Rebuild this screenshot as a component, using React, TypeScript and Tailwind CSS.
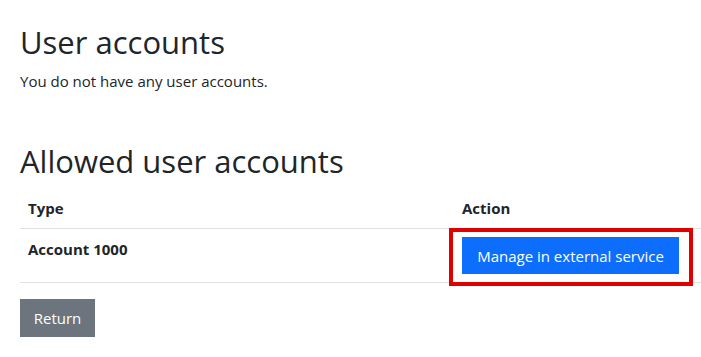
export default function App() {
  return (
    <div
      className="min-h-screen bg-white pl-[20px] pt-[23px] text-[15px] leading-[24px] text-[#212529]"
      style={{ fontFamily: '"Open Sans", "Noto Sans", sans-serif' }}
    >
      <h2 className="mb-2 text-[31px] leading-[38px] font-normal">User accounts</h2>
      <p className="mb-4">You do not have any user accounts.</p>

      <h2 className="mt-[49px] mb-2 text-[31px] leading-[38px] font-normal">Allowed user accounts</h2>
      <table className="mb-4 w-full border-collapse">
        <thead>
          <tr className="border-b border-[#dee2e6]">
            <th className="w-[434px] p-2 text-left align-top font-bold">Type</th>
            <th className="p-2 text-left align-top font-bold">Action</th>
          </tr>
        </thead>
        <tbody>
          <tr className="border-b border-[#dee2e6]">
            <th className="p-2 text-left align-top font-bold">Account 1000</th>
            <td className="p-2 align-top">
              <div className="relative inline-block">
                <button
                  type="button"
                  className="h-[37px] w-[217px] border border-[#0d6efd] bg-[#0d6efd] text-white"
                >
                  Manage in external service
                </button>
                <div className="pointer-events-none absolute -top-[9px] -left-[13px] -right-[14px] -bottom-[12px] border-4 border-[#e00000]" />
              </div>
            </td>
          </tr>
        </tbody>
      </table>

      <button
        type="button"
        className="h-[38px] w-[75px] border border-[#6c757d] bg-[#6c757d] text-white"
      >
        Return
      </button>
    </div>
  );
}
